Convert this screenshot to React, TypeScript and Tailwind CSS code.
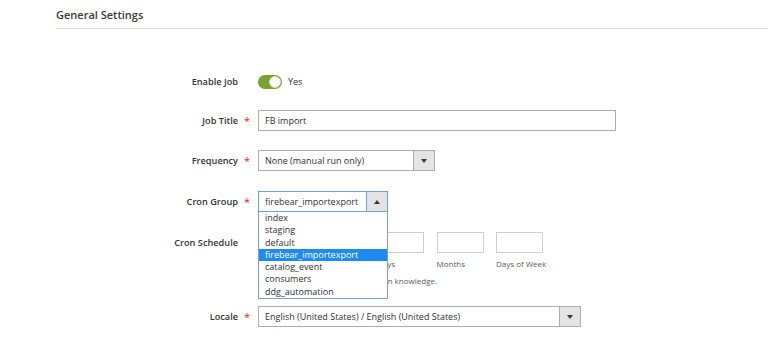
import React from "react";

const font = { fontFamily: '"Open Sans", "Liberation Sans", sans-serif' };

function Label({ text, required }: { text: string; required?: boolean }) {
  return (
    <>
      <div className="w-[182px] shrink-0 text-right text-[9.2px] font-semibold text-[#333333] leading-[21px]">
        {text}
      </div>
      <div className="w-[20px] shrink-0 pl-[6px] text-[11px] leading-[21px] text-[#e22626]">
        {required ? "*" : ""}
      </div>
    </>
  );
}

function Tri({ up }: { up?: boolean }) {
  return (
    <svg width="6" height="4" viewBox="0 0 6 4">
      {up ? (
        <polygon points="0,4 6,4 3,0" fill="#41362f" />
      ) : (
        <polygon points="0,0 6,0 3,4" fill="#41362f" />
      )}
    </svg>
  );
}

function Select({
  value,
  width,
  active,
  children,
}: {
  value: string;
  width: string;
  active?: boolean;
  children?: React.ReactNode;
}) {
  return (
    <div className={`relative ${width}`}>
      <div
        className={`flex h-[21px] w-full border ${
          active ? "border-[#6ea3db]" : "border-[#adadad]"
        } bg-white`}
      >
        <div className="flex-1 pl-[6px] text-[9px] leading-[19px] text-[#303030] whitespace-nowrap overflow-hidden">
          {value}
        </div>
        <div
          className={`flex w-[21px] items-center justify-center border-l ${
            active ? "border-[#6ea3db]" : "border-[#adadad]"
          } bg-[#e3e3e3]`}
        >
          <Tri up={active} />
        </div>
      </div>
      {children}
    </div>
  );
}

const options = [
  "index",
  "staging",
  "default",
  "firebear_importexport",
  "catalog_event",
  "consumers",
  "ddg_automation",
];

export default function App() {
  return (
    <div
      className="relative h-[342px] w-[768px] overflow-hidden bg-white"
      style={font}
    >
      <div className="ml-[56px] border-b border-[#e3e3e3] pt-[7px] pb-[6px] text-[11px] font-semibold leading-[15px] text-[#41362f]">
        General Settings
      </div>

      {/* Enable Job */}
      <div className="mt-[42px] ml-[56px] flex items-center">
        <Label text="Enable Job" />
        <div className="flex items-center">
          <div className="flex h-[14px] w-[24px] items-center justify-end rounded-full bg-[#79a22e] pr-[1px]">
            <div className="h-[12px] w-[12px] rounded-full border border-[#d6d6d6] bg-white" />
          </div>
          <span className="ml-[6px] text-[9px] text-[#303030]">Yes</span>
        </div>
      </div>

      {/* Job Title */}
      <div className="mt-[18px] ml-[56px] flex items-center">
        <Label text="Job Title" required />
        <div className="h-[21px] w-[358px] border border-[#adadad] bg-white pl-[6px] text-[9px] leading-[19px] text-[#303030]">
          FB import
        </div>
      </div>

      {/* Frequency */}
      <div className="mt-[19px] ml-[56px] flex items-center">
        <Label text="Frequency" required />
        <Select value="None (manual run only)" width="w-[177px]" />
      </div>

      {/* Cron Group */}
      <div className="mt-[20px] ml-[56px] flex items-start">
        <Label text="Cron Group" required />
        <div className="relative z-10">
          <Select value="firebear_importexport" width="w-[130px]" active>
            <div className="absolute left-0 top-full w-full border border-t-0 border-[#7b9fd4] bg-white">
              {options.map((o) => (
                <div
                  key={o}
                  className={`h-[12.3px] pl-[6px] text-[9px] leading-[12.3px] whitespace-nowrap ${
                    o === "firebear_importexport"
                      ? "bg-[#1e8af5] text-white"
                      : "text-[#303030]"
                  }`}
                >
                  {o}
                </div>
              ))}
            </div>
          </Select>
        </div>
      </div>

      {/* Cron Schedule */}
      <div className="mt-[20px] ml-[56px] flex items-start">
        <Label text="Cron Schedule" />
        <div className="flex flex-col">
          <div className="flex gap-[12.5px]">
            {["Minutes", "Hours", "Days", "Months", "Days of Week"].map((l) => (
              <div key={l} className="flex w-[47px] flex-col">
                <div className="h-[21px] w-[47px] border border-[#cfcfcf] bg-white" />
                <div className="mt-[5px] text-[8px] leading-[12px] whitespace-nowrap text-[#5a5a5a]">
                  {l}
                </div>
              </div>
            ))}
          </div>
          <div className="mt-[5px] text-[8px] leading-[12px] whitespace-nowrap text-[#5a5a5a]">
            Please use it only if you have certain knowledge.
          </div>
        </div>
      </div>

      {/* Locale */}
      <div className="mt-[19px] ml-[56px] flex items-center">
        <Label text="Locale" required />
        <Select
          value="English (United States) / English (United States)"
          width="w-[323px]"
        />
      </div>
    </div>
  );
}
